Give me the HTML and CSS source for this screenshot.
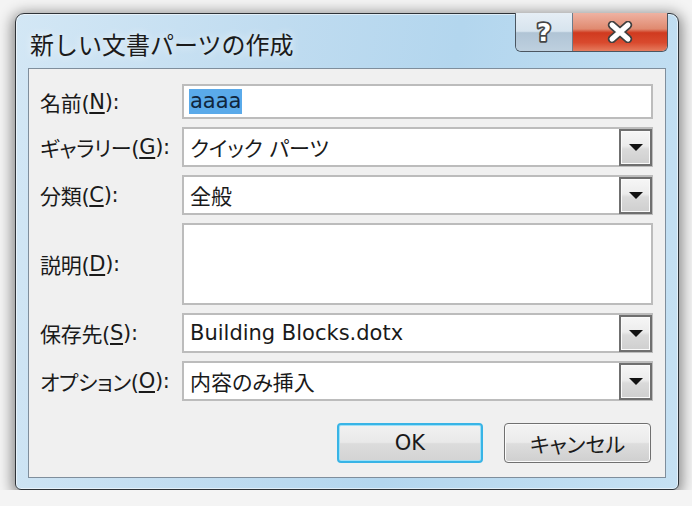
FILE: index.html
```html
<!DOCTYPE html>
<html lang="ja">
<head>
    <meta charset="UTF-8">
    <title>新しい文書パーツの作成</title>
    <link rel="stylesheet" href="styles.css">
</head>
<body>
    <div class="window">
        <div class="titlebar">
            <span class="title">新しい文書パーツの作成</span>
            <div class="caption-buttons">
                <div class="cap-btn help">
                    <svg width="26" height="28" viewBox="0 0 26 28">
                        <text x="13" y="23" text-anchor="middle" class="help-glyph">?</text>
                    </svg>
                </div>
                <div class="cap-btn close">
                    <svg width="28" height="22" viewBox="0 0 28 22">
                        <path d="M6 4 L22 18 M22 4 L6 18" stroke="#404040" stroke-width="8.5" stroke-linecap="round"/>
                        <path d="M6 4 L22 18 M22 4 L6 18" stroke="#fff" stroke-width="5" stroke-linecap="round"/>
                    </svg>
                </div>
            </div>
        </div>

        <div class="client">
            <div class="fields">
                <label>名前(<u>N</u>):</label>
                <div class="box"><span class="sel">aaaa</span></div>

                <label>ギャラリー(<u>G</u>):</label>
                <div class="box combo"><span class="value">クイック パーツ</span><span class="drop"><i class="arrow"></i></span></div>

                <label>分類(<u>C</u>):</label>
                <div class="box combo"><span class="value">全般</span><span class="drop"><i class="arrow"></i></span></div>

                <label>説明(<u>D</u>):</label>
                <div class="box memo"></div>

                <label>保存先(<u>S</u>):</label>
                <div class="box combo"><span class="value">Building Blocks.dotx</span><span class="drop"><i class="arrow"></i></span></div>

                <label>オプション(<u>O</u>):</label>
                <div class="box combo"><span class="value">内容のみ挿入</span><span class="drop"><i class="arrow"></i></span></div>
            </div>

            <div class="actions">
                <button class="btn btn-default">OK</button>
                <button class="btn">キャンセル</button>
            </div>
        </div>
    </div>
</body>
</html>
```

FILE: styles.css
```css
* {
    box-sizing: border-box;
}

body {
    margin: 0;
    padding: 13px 13px 0 15px;
    background-color: #f4f4f4;
    font-family: 'DejaVu Sans', 'Noto Sans CJK JP', sans-serif;
    font-size: 21px;
    color: #1a1a1a;
}

.window {
    width: 664px;
    height: 477px;
    display: flex;
    flex-direction: column;
    border: 1px solid #2e3338;
    border-radius: 9px 9px 6px 6px;
    padding: 0 12px 11px 12px;
    background: linear-gradient(100deg, #d3e7f5 0%, #c0dcf0 35%, #b3d6ee 60%, #c6e1f3 100%);
    box-shadow: 0 3px 14px 3px rgba(0,0,0,0.45), inset 0 0 0 1px rgba(255,255,255,0.55);
}

.titlebar {
    height: 54px;
    display: flex;
    justify-content: space-between;
    align-items: flex-start;
}

.title {
    font-family: 'Noto Sans CJK JP', sans-serif;
    font-size: 24px;
    line-height: 1;
    margin-top: 18px;
    margin-left: 2px;
    color: #1b1b1b;
    text-shadow: 0 0 8px rgba(255,255,255,0.9);
}

.caption-buttons {
    display: flex;
    margin-top: -1px;
    margin-right: -2px;
    border: 1px solid #4b5661;
    border-top: none;
    border-radius: 0 0 6px 6px;
    overflow: hidden;
}

.cap-btn {
    height: 38px;
    display: flex;
    align-items: center;
    justify-content: center;
}

.help {
    width: 57px;
    border-right: 1px solid #6d7d8c;
    background: linear-gradient(#e6eef5 0%, #d7e4ee 48%, #b0c4d5 52%, #bed0df 100%);
}

.help-glyph {
    font-family: 'DejaVu Sans', sans-serif;
    font-weight: 700;
    font-size: 25px;
    fill: #fff;
    stroke: #454545;
    stroke-width: 3.5px;
    stroke-linejoin: round;
    paint-order: stroke;
}

.close {
    width: 94px;
    background: linear-gradient(#eeb2a2 0%, #e08a70 42%, #d03a1f 52%, #d94a2e 78%, #e57c5e 100%);
}

.client {
    flex: 1;
    border: 1px solid #7f8e9c;
    background-color: #f0f0f0;
    padding: 15px 14px 0 11px;
}

.fields {
    display: grid;
    grid-template-columns: 142px 471px;
    grid-template-rows: 35px 40px 40px 82px 40px 40px;
    row-gap: 8px;
}

label {
    display: flex;
    align-items: center;
    white-space: nowrap;
    color: #1a1a1a;
    font-feature-settings: "palt";
    letter-spacing: -0.3px;
}

label u {
    text-underline-offset: 3px;
}

.box {
    display: flex;
    align-items: center;
    border: 2px solid #bcbcbc;
    background: #fff;
    padding-left: 5px;
    white-space: nowrap;
}

.sel {
    background-color: #5aaaea;
    color: #10263d;
    padding: 0 1px;
    line-height: 25px;
}

.combo .value {
    flex: 1;
    padding-left: 1px;
    font-feature-settings: "palt";
}

.drop {
    width: 33px;
    height: 37px;
    margin-right: -1px;
    display: flex;
    align-items: center;
    justify-content: center;
    border: 2px solid #6f6f6f;
    box-shadow: inset 0 0 0 1px #fafafa;
    background: linear-gradient(#f6f6f6 0%, #ececec 45%, #dadada 55%, #cfcfcf 100%);
}

.arrow {
    width: 0;
    height: 0;
    border-left: 7px solid transparent;
    border-right: 7px solid transparent;
    border-top: 7px solid #111;
}

.actions {
    display: flex;
    justify-content: flex-end;
    gap: 21px;
    margin-top: 22px;
}

.btn {
    width: 147px;
    height: 40px;
    border: 1px solid #707070;
    border-radius: 4px;
    font-family: 'DejaVu Sans', 'Noto Sans CJK JP', sans-serif;
    font-size: 21px;
    font-feature-settings: "palt";
    color: #1a1a1a;
    background: linear-gradient(#f3f3f3 0%, #ebebeb 48%, #dddddd 52%, #cfcfcf 100%);
    box-shadow: inset 0 0 0 1px #fbfbfb;
    padding: 0;
}

.btn-default {
    width: 146px;
    border: 2px solid #38b4e6;
    box-shadow: inset 0 0 0 1px #9ee0f7;
    background: linear-gradient(#f1f1f1 0%, #e9e9e9 48%, #dcdcdc 52%, #d3d3d3 100%);
}
```
